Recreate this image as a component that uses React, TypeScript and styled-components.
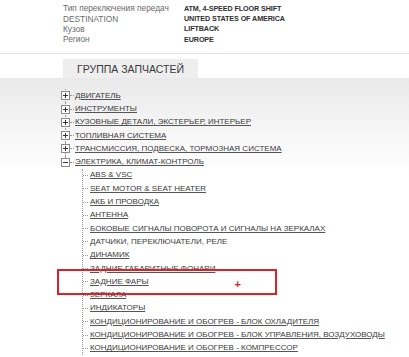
import React from 'react';
import styled, { createGlobalStyle } from 'styled-components';

const GlobalStyle = createGlobalStyle`
  html, body {
    margin: 0;
    padding: 0;
    background: #fff;
    overflow: hidden;
  }
  body {
    font-family: "Liberation Sans", Arial, sans-serif;
    color: #333;
  }
`;

const specs = [
  { label: 'Тип переключения передач', value: 'ATM, 4-SPEED FLOOR SHIFT' },
  { label: 'DESTINATION', value: 'UNITED STATES OF AMERICA' },
  { label: 'Кузов', value: 'LIFTBACK' },
  { label: 'Регион', value: 'EUROPE' },
];

const groups = [
  'ДВИГАТЕЛЬ',
  'ИНСТРУМЕНТЫ',
  'КУЗОВНЫЕ ДЕТАЛИ, ЭКСТЕРЬЕР, ИНТЕРЬЕР',
  'ТОПЛИВНАЯ СИСТЕМА',
  'ТРАНСМИССИЯ, ПОДВЕСКА, ТОРМОЗНАЯ СИСТЕМА',
];

const electric: { name: string; plain?: boolean }[] = [
  { name: 'ABS & VSC' },
  { name: 'SEAT MOTOR & SEAT HEATER' },
  { name: 'АКБ И ПРОВОДКА' },
  { name: 'АНТЕННА' },
  { name: 'БОКОВЫЕ СИГНАЛЫ ПОВОРОТА И СИГНАЛЫ НА ЗЕРКАЛАХ' },
  { name: 'ДАТЧИКИ, ПЕРЕКЛЮЧАТЕЛИ, РЕЛЕ', plain: true },
  { name: 'ДИНАМИК' },
  { name: 'ЗАДНИЕ ГАБАРИТНЫЕ ФОНАРИ' },
  { name: 'ЗАДНИЕ ФАРЫ' },
  { name: 'ЗЕРКАЛА' },
  { name: 'ИНДИКАТОРЫ' },
  { name: 'КОНДИЦИОНИРОВАНИЕ И ОБОГРЕВ - БЛОК ОХЛАДИТЕЛЯ' },
  { name: 'КОНДИЦИОНИРОВАНИЕ И ОБОГРЕВ - БЛОК УПРАВЛЕНИЯ, ВОЗДУХОВОДЫ' },
  { name: 'КОНДИЦИОНИРОВАНИЕ И ОБОГРЕВ - КОМПРЕССОР' },
];

function Toggle({ open }: { open?: boolean }) {
  return (
    <ToggleBox>
      <svg width="9" height="9" viewBox="0 0 9 9">
        <rect x="0.5" y="0.5" width="8" height="8" fill="#fff" stroke="#8a8a8a" />
        <line x1="2" y1="4.5" x2="7" y2="4.5" stroke="#333" />
        {!open && <line x1="4.5" y1="2" x2="4.5" y2="7" stroke="#333" />}
      </svg>
    </ToggleBox>
  );
}

export default function App() {
  return (
    <Page>
      <GlobalStyle />
      <Specs>
        {specs.map((s) => (
          <React.Fragment key={s.label}>
            <SpecLabel>{s.label}</SpecLabel>
            <SpecValue>{s.value}</SpecValue>
          </React.Fragment>
        ))}
      </Specs>
      <TabBar>
        <Tab>ГРУППА ЗАПЧАСТЕЙ</Tab>
      </TabBar>
      <Panel>
        <Tree>
          {groups.map((g) => (
            <Node key={g}>
              <Row>
                <Toggle />
                <Dash />
                <Link>{g}</Link>
              </Row>
            </Node>
          ))}
          <Node $last>
            <Row>
              <Toggle open />
              <Dash />
              <Link>ЭЛЕКТРИКА, КЛИМАТ-КОНТРОЛЬ</Link>
            </Row>
            <Children>
              {electric.map((c) => (
                <Child key={c.name}>
                  <Link $plain={c.plain}>{c.name}</Link>
                </Child>
              ))}
            </Children>
          </Node>
        </Tree>
        <Highlight>
          <Cross>+</Cross>
        </Highlight>
      </Panel>
    </Page>
  );
}

const Page = styled.div`
  width: 409px;
  height: 357px;
  overflow: hidden;
`;

const Specs = styled.div`
  display: grid;
  grid-template-columns: 121px auto;
  grid-auto-rows: 10.4px;
  align-items: center;
  padding: 3px 0 8px 63px;
  border-bottom: 1px solid #e4e4e4;
`;

const SpecLabel = styled.span`
  font-size: 8.3px;
  color: #6a6a6a;
  white-space: nowrap;
`;

const SpecValue = styled.span`
  font-size: 7.2px;
  font-weight: bold;
  color: #2e2e2e;
  white-space: nowrap;
  letter-spacing: -0.1px;
`;

const TabBar = styled.div`
  display: flex;
  padding: 5px 0 0 63px;
`;

const Tab = styled.div`
  width: 135px;
  height: 19px;
  display: flex;
  align-items: center;
  justify-content: center;
  background: #eeeeee;
  font-size: 10.5px;
  color: #3a3a3a;
  padding-top: 2px;
  box-sizing: border-box;
`;

const Panel = styled.div`
  position: relative;
  padding: 11.5px 0 0 61px;
  height: 300px;
  background: linear-gradient(#e9e9e9 0, #f3f3f3 40px, #ffffff 95px);
`;

const Tree = styled.ul`
  list-style: none;
  margin: 0;
  padding: 0;
`;

const Node = styled.li<{ $last?: boolean }>`
  position: relative;

  &::before {
    content: '';
    position: absolute;
    left: 4px;
    top: 0;
    height: ${(p) => (p.$last ? '6px' : '13.3px')};
    border-left: 1px dotted #9a9a9a;
  }
`;

const Row = styled.div`
  position: relative;
  display: flex;
  align-items: center;
  height: 13.3px;
`;

const ToggleBox = styled.span`
  position: relative;
  z-index: 1;
  display: flex;
  width: 9px;
  height: 9px;
`;

const Dash = styled.span`
  width: 4px;
  margin: 0 1px 0 0;
  border-top: 1px dotted #9a9a9a;
`;

const Link = styled.a<{ $plain?: boolean }>`
  font-size: 8px;
  color: #3a3a3a;
  text-decoration: ${(p) => (p.$plain ? 'none' : 'underline')};
  text-decoration-color: #555;
  white-space: nowrap;
  line-height: 1;
`;

const Children = styled.ul`
  list-style: none;
  margin: 0 0 0 21px;
  padding: 0;
  border-left: 1px dotted #9a9a9a;
`;

const Child = styled.li`
  display: flex;
  align-items: center;
  height: 13.3px;

  &::before {
    content: '';
    width: 5px;
    margin-right: 2px;
    border-top: 1px dotted #9a9a9a;
  }
`;

const Highlight = styled.div`
  position: absolute;
  left: 57px;
  top: 191px;
  width: 220px;
  height: 26px;
  border: 2px solid #d8232a;
  box-sizing: border-box;
  display: flex;
  align-items: center;
  justify-content: flex-end;
  padding-right: 34px;
`;

const Cross = styled.span`
  color: #d8232a;
  font-size: 11px;
  font-weight: bold;
  line-height: 1;
  margin-top: 6px;
`;
